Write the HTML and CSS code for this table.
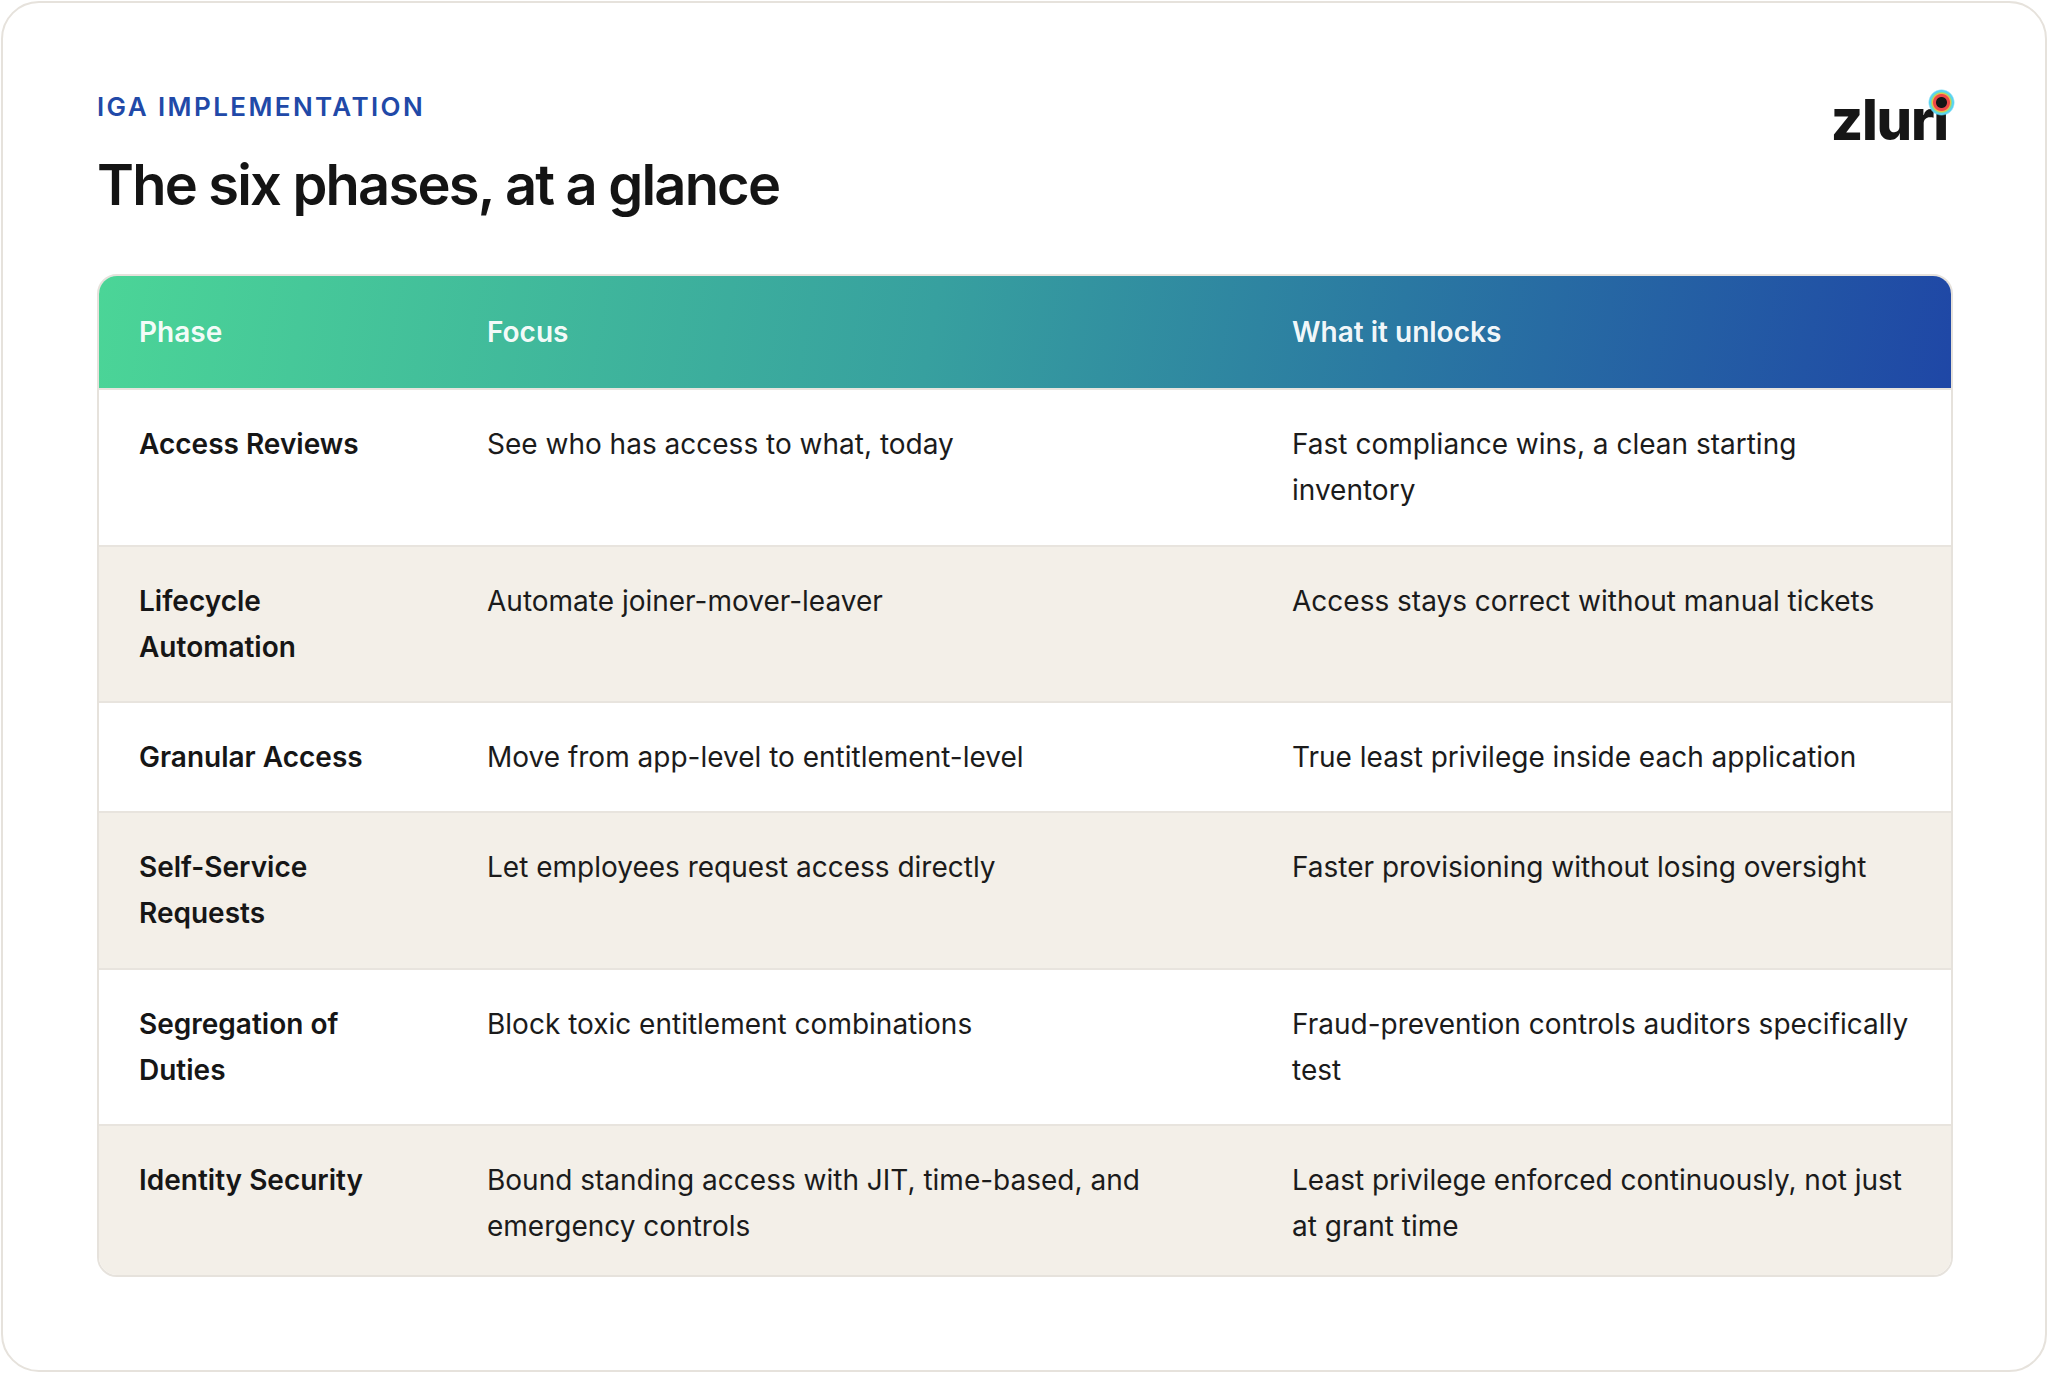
FILE: index.html
```html
<!DOCTYPE html>
<html lang="en">
<head>
<meta charset="utf-8">
<title>IGA Implementation — The six phases, at a glance</title>
<link rel="stylesheet" href="styles.css">
</head>
<body>
<div class="card">
  <header class="top">
    <div class="titles">
      <div class="eyebrow">IGA IMPLEMENTATION</div>
      <h1 class="title">The six phases, at a glance</h1>
    </div>
    <div class="logo">zlur<span class="logo-i">ı</span></div>
  </header>

  <div class="table">
    <div class="row head">
      <div class="cell">Phase</div>
      <div class="cell">Focus</div>
      <div class="cell">What it unlocks</div>
    </div>
    <div class="row">
      <div class="cell phase">Access Reviews</div>
      <div class="cell">See who has access to what, today</div>
      <div class="cell">Fast compliance wins, a clean starting inventory</div>
    </div>
    <div class="row alt">
      <div class="cell phase">Lifecycle Automation</div>
      <div class="cell">Automate joiner-mover-leaver</div>
      <div class="cell">Access stays correct without manual tickets</div>
    </div>
    <div class="row">
      <div class="cell phase">Granular Access</div>
      <div class="cell">Move from app-level to entitlement-level</div>
      <div class="cell">True least privilege inside each application</div>
    </div>
    <div class="row alt">
      <div class="cell phase">Self-Service Requests</div>
      <div class="cell">Let employees request access directly</div>
      <div class="cell">Faster provisioning without losing oversight</div>
    </div>
    <div class="row">
      <div class="cell phase">Segregation of Duties</div>
      <div class="cell">Block toxic entitlement combinations</div>
      <div class="cell">Fraud-prevention controls auditors specifically test</div>
    </div>
    <div class="row alt last">
      <div class="cell phase">Identity Security</div>
      <div class="cell">Bound standing access with JIT, time-based, and emergency controls</div>
      <div class="cell">Least privilege enforced continuously, not just at grant time</div>
    </div>
  </div>
</div>
</body>
</html>
```

FILE: styles.css
```css
* { box-sizing: border-box; }

html, body {
  margin: 0;
  padding: 0;
  background: #ffffff;
}

body {
  font-family: Inter, "Noto Sans", "Liberation Sans", sans-serif;
  color: #1b1b1b;
}

.card {
  margin: 1px;
  height: 1371px;
  border: 2px solid #e6e2dc;
  border-radius: 38px;
  background: #ffffff;
  padding: 88px 92px 0 94px;
  overflow: hidden;
}

.top {
  display: flex;
  justify-content: space-between;
  align-items: flex-start;
}

.eyebrow {
  font-size: 26px;
  line-height: 32px;
  font-weight: 600;
  letter-spacing: 2.4px;
  color: #2149a8;
}

.title {
  margin: 28px 0 0 0;
  font-size: 56px;
  line-height: 68px;
  font-weight: 600;
  letter-spacing: -1.8px;
  color: #141414;
}

.logo {
  margin-top: 1px;
  margin-right: 5px;
  font-size: 56px;
  line-height: 56px;
  font-weight: 800;
  letter-spacing: -1.2px;
  color: #161616;
}

.logo-i {
  position: relative;
  display: inline-block;
}

.logo-i::after {
  content: "";
  position: absolute;
  left: 50%;
  top: -3px;
  width: 27px;
  height: 27px;
  margin-left: -13px;
  border-radius: 50%;
  background: radial-gradient(circle,
    #151515 0 5px,
    #ee4848 6px 8px,
    #f3b844 9px,
    #86e08c 10px,
    #5ad3f2 11px 12px,
    rgba(90, 211, 242, 0) 13.5px);
}

.table {
  margin-top: 55px;
  border: 2px solid #e6e2dc;
  border-radius: 20px;
  overflow: hidden;
  background: #ffffff;
}

.row {
  display: grid;
  grid-template-columns: 348px 805px 1fr;
  border-top: 2px solid #e8e4de;
}

.row.head {
  border-top: 0;
  background: linear-gradient(100deg, #4bd597 0%, #37a09f 45%, #2a78a2 70%, #1f47a6 100%);
}

.row.alt {
  background: #f3efe8;
}

.cell {
  padding: 31px 40px;
  font-size: 28px;
  line-height: 46.2px;
  font-weight: 400;
}

.head .cell {
  padding: 33px 40px 33px 40px;
  font-weight: 600;
  color: rgba(255, 255, 255, 0.96);
}

.cell.phase {
  font-weight: 600;
  color: #161616;
}

.last .cell {
  padding-bottom: 26px;
}
```
